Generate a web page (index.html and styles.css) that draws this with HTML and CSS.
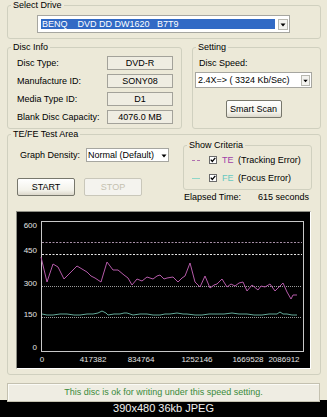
FILE: index.html
```html
<!DOCTYPE html>
<html>
<head>
<meta charset="utf-8">
<link rel="stylesheet" href="styles.css">
</head>
<body>
<div class="dialog">
  <fieldset class="group g-drive">
    <legend>Select Drive</legend>
    <div class="drive-body">
      <div class="combo combo-drive">
        <span class="combo-text sel">BENQ    DVD DD DW1620   B7T9</span>
        <span class="combo-btn"><svg width="8" height="9" viewBox="0 0 8 9"><path d="M1.5 3.5h5l-2.5 3z" fill="#000"/></svg></span>
      </div>
    </div>
  </fieldset>

  <div class="row2">
    <fieldset class="group g-info">
      <legend>Disc Info</legend>
      <div class="info-body">
        <div class="info-row"><span>Disc Type:</span><span class="value">DVD-R</span></div>
        <div class="info-row"><span>Manufacture ID:</span><span class="value">SONY08</span></div>
        <div class="info-row"><span>Media Type ID:</span><span class="value">D1</span></div>
        <div class="info-row"><span>Blank Disc Capacity:</span><span class="value">4076.0 MB</span></div>
      </div>
    </fieldset>
    <fieldset class="group g-setting">
      <legend>Setting</legend>
      <div class="setting-body">
        <div class="speed-label">Disc Speed:</div>
        <div class="combo combo-speed">
          <span class="combo-text">2.4X=&gt; ( 3324 Kb/Sec)</span>
          <span class="combo-btn"><svg width="8" height="9" viewBox="0 0 8 9"><path d="M1.5 3.5h5l-2.5 3z" fill="#000"/></svg></span>
        </div>
        <button class="btn btn-scan">Smart Scan</button>
      </div>
    </fieldset>
  </div>

  <fieldset class="group g-test">
    <legend>TE/FE Test Area</legend>
    <div class="test-body">
      <div class="test-top">
        <div class="test-left">
          <div class="density">
            <span class="density-label">Graph Density:</span>
            <div class="combo combo-density">
              <span class="combo-text">Normal (Default)</span>
              <span class="combo-btn"><svg width="6" height="9" viewBox="0 0 6 9"><path d="M0.5 3.5h5l-2.5 3z" fill="#000"/></svg></span>
            </div>
          </div>
          <div class="buttons">
            <button class="btn btn-start">START</button>
            <button class="btn btn-stop" disabled>STOP</button>
          </div>
        </div>
        <div class="test-right">
          <fieldset class="group g-criteria">
            <legend>Show Criteria</legend>
            <div class="criteria-body">
              <div class="crit-row">
                <span class="dash dash-te"></span>
                <svg class="check" width="8" height="8" viewBox="0 0 8 8"><rect x="0.5" y="0.5" width="7" height="7" fill="#fff" stroke="#6b6b6b"/><path d="M1.8 3.6 L3.3 5.4 L6.3 1.8" stroke="#000" stroke-width="1.3" fill="none"/></svg>
                <span class="crit-code te">TE</span>
                <span class="crit-name">(Tracking Error)</span>
              </div>
              <div class="crit-row">
                <span class="dash dash-fe"></span>
                <svg class="check" width="8" height="8" viewBox="0 0 8 8"><rect x="0.5" y="0.5" width="7" height="7" fill="#fff" stroke="#6b6b6b"/><path d="M1.8 3.6 L3.3 5.4 L6.3 1.8" stroke="#000" stroke-width="1.3" fill="none"/></svg>
                <span class="crit-code fe">FE</span>
                <span class="crit-name">(Focus Error)</span>
              </div>
            </div>
          </fieldset>
          <div class="elapsed"><span>Elapsed Time:</span><span class="elapsed-val">615 seconds</span></div>
        </div>
      </div>
      <div class="graph">
        <svg width="293" height="156" viewBox="0 0 293 156">
          <rect x="24.5" y="9.5" width="262" height="130" fill="none" stroke="#c8c8c8"/>
          <line x1="25" y1="30.5" x2="285" y2="30.5" stroke="#a890a8" stroke-dasharray="2 1.5"/>
          <line x1="25" y1="42.5" x2="285" y2="42.5" stroke="#e6e6e6" stroke-dasharray="2 1.5"/>
          <line x1="25" y1="74.5" x2="285" y2="74.5" stroke="#9a9a9a" stroke-dasharray="1 1"/>
          <line x1="25" y1="105.5" x2="285" y2="105.5" stroke="#9a9a9a" stroke-dasharray="1 1"/>
          <polyline fill="none" stroke="#b45aa8" stroke-width="1" points="24,45 30,70 36,52 41,55 47,67 53,61 60,54 65,57 70,60 74,64 78,66 84,70 90,50 96,58 101,58 107,63 111,66 115,73 120,67 125,69 130,65 136,67 140,64 143,63 147,67 150,66 156,65 161,70 165,66 168,64 173,51 178,70 183,75 188,64 193,76 197,73 200,72 205,67 210,75 214,72 218,74 222,71 226,70 230,79 235,73 241,78 244,74 248,75 253,72 258,79 262,75 266,71 270,80 274,87 276,83 280,83"/>
          <polyline fill="none" stroke="#62a898" stroke-width="1" points="25,102 30,103 36,103 43,102 50,102 57,103 63,103 70,102 76,102 81,101 85,99 89,101 91,103 97,102 103,102 107,101 110,101 116,103 123,102 130,102 136,103 143,103 148,102 153,102 160,101 166,102 170,102 178,103 185,103 192,102 200,102 207,102 215,101 222,102 230,102 237,103 245,103 252,102 260,102 263,100 266,102 270,102 275,103 280,103"/>
          <g class="axis">
            <text x="20" y="16" text-anchor="end">600</text>
            <text x="20" y="41" text-anchor="end">450</text>
            <text x="20" y="74" text-anchor="end">300</text>
            <text x="20" y="105" text-anchor="end">150</text>
            <text x="20" y="138" text-anchor="end">0</text>
            <text x="25" y="150" text-anchor="middle">0</text>
            <text x="76" y="150" text-anchor="middle">417382</text>
            <text x="124" y="150" text-anchor="middle">834764</text>
            <text x="180" y="150" text-anchor="middle">1252146</text>
            <text x="231" y="150" text-anchor="middle">1669528</text>
            <text x="267" y="150" text-anchor="middle">2086912</text>
          </g>
        </svg>
      </div>
    </div>
  </fieldset>

  <div class="status">This disc is ok for writing under this speed setting.</div>
</div>
<div class="caption">390x480 36kb JPEG</div>
</body>
</html>
```

FILE: styles.css
```css
html, body {
  margin: 0;
  padding: 0;
}
body {
  width: 327px;
  height: 417px;
  overflow: hidden;
  background: #000;
  font-family: "Liberation Sans", Arial, sans-serif;
  font-size: 9px;
  line-height: 11px;
  color: #000;
}
.dialog {
  display: flow-root;
  box-sizing: border-box;
  height: 400px;
  padding: 0 6px 0 7px;
  background: #ece9d8;
}
fieldset.group {
  margin: 0;
  padding: 0;
  min-width: 0;
  border: 1px solid #d0d0bf;
  border-radius: 3px;
}
fieldset.group > legend {
  margin-left: 3px;
  padding: 0 2px;
  line-height: 11px;
}
.g-drive {
  margin-top: -2px;
}
.drive-body {
  padding: 4px 0 5px 29px;
}
.combo {
  display: flex;
  align-items: center;
  box-sizing: border-box;
  background: #fff;
  border: 1px solid #a6a6a0;
}
.combo-text {
  flex: 1;
  white-space: pre;
  overflow: hidden;
}
.combo-btn {
  display: flex;
  align-items: center;
  justify-content: center;
  box-sizing: border-box;
  background: #f3f3ef;
  border: 1px solid #b8b8b0;
}
.combo-drive {
  width: 253px;
  height: 18px;
  padding: 3px 1px 3px 3px;
}
.combo-drive .sel {
  height: 10px;
  line-height: 10px;
  margin-right: 3px;
  padding-left: 1px;
  background: #316ac5;
  color: #fff;
}
.combo-drive .combo-btn {
  width: 10px;
  height: 11px;
}
.row2 {
  display: flex;
  gap: 10px;
  margin-top: 3px;
}
.g-info {
  width: 175px;
  box-sizing: border-box;
}
.g-setting {
  flex: 1;
}
.info-body {
  padding: 1px 8px 2px 9px;
}
.info-row {
  display: flex;
  justify-content: space-between;
  align-items: center;
  height: 18px;
}
.value {
  box-sizing: border-box;
  width: 66px;
  height: 14px;
  line-height: 12px;
  text-align: center;
  border: 1px solid #a3a29a;
  background: #efede2;
}
.setting-body {
  display: flex;
  flex-direction: column;
  padding: 1px 8px 0 2px;
}
.speed-label {
  height: 18px;
  line-height: 18px;
  padding-left: 4px;
}
.combo-speed {
  height: 16px;
  padding: 2px 1px 2px 2px;
}
.combo-speed .combo-btn {
  width: 9px;
  height: 11px;
}
.btn {
  box-sizing: border-box;
  height: 18px;
  padding: 0;
  font-family: "Liberation Sans", Arial, sans-serif;
  font-size: 9px;
  color: #000;
  border: 1px solid #77776c;
  border-radius: 2px;
  background: linear-gradient(#ffffff, #f3f2ea 70%, #dcd8cb);
}
.btn-scan {
  width: 56px;
  margin: 12px auto 0;
  height: 18px;
}
.test-body {
  padding: 0 8px 5px 9px;
}
.test-top {
  display: flex;
}
.test-left {
  width: 166px;
}
.test-right {
  flex: 1;
}
.density {
  display: flex;
  align-items: center;
  height: 14px;
  margin-top: 8px;
}
.density-label {
  width: 66px;
  padding-left: 3px;
}
.combo-density {
  width: 83px;
  height: 14px;
  padding: 1px 1px 1px 1px;
}
.combo-density .combo-btn {
  width: 6px;
  height: 10px;
  border: none;
  background: #fff;
}
.buttons {
  display: flex;
  gap: 9px;
  margin-top: 16px;
}
.btn-start,
.btn-stop {
  width: 58px;
}
.btn-stop {
  color: #c4c1b0;
  border-color: #c9c7ba;
  background: #f4f3ee;
}
.g-criteria {
  margin-top: -5px;
}
.criteria-body {
  padding: 0 0 2px 8px;
}
.crit-row {
  display: flex;
  align-items: center;
  height: 18px;
}
.dash {
  width: 8px;
  height: 0;
  margin-right: 9px;
}
.dash-te {
  border-top: 1px dashed #b070b0;
}
.dash-fe {
  border-top: 1px solid #8ed6c8;
}
.check {
  display: block;
  margin-right: 5px;
}
.crit-code {
  width: 16px;
}
.te {
  color: #a040a8;
}
.fe {
  color: #66c8c0;
}
.elapsed {
  margin-top: 2px;
  padding-left: 1px;
  height: 11px;
}
.elapsed-val {
  margin-left: 17px;
}
.graph {
  box-sizing: border-box;
  width: 295px;
  height: 158px;
  margin: 8px 0 0 -1px;
  border: 1px solid;
  border-color: #8e8e84 #ffffff #ffffff #8e8e84;
  background: #000;
}
.graph svg {
  display: block;
}
.axis text {
  font-family: "Liberation Sans", Arial, sans-serif;
  font-size: 8px;
  fill: #e4e4e4;
}
.g-test {
  margin-top: 5px;
}
.status {
  box-sizing: border-box;
  height: 19px;
  margin: 8px 1px 0 0;
  border: 1px solid #c4c1b0;
  box-shadow: inset 1px 1px #fbfbf6;
  background: #efede3;
  text-align: center;
  line-height: 17px;
  color: #3a8a3a;
}
.caption {
  height: 17px;
  line-height: 17px;
  text-align: center;
  color: #f2f2f2;
  font-size: 11px;
}
```
